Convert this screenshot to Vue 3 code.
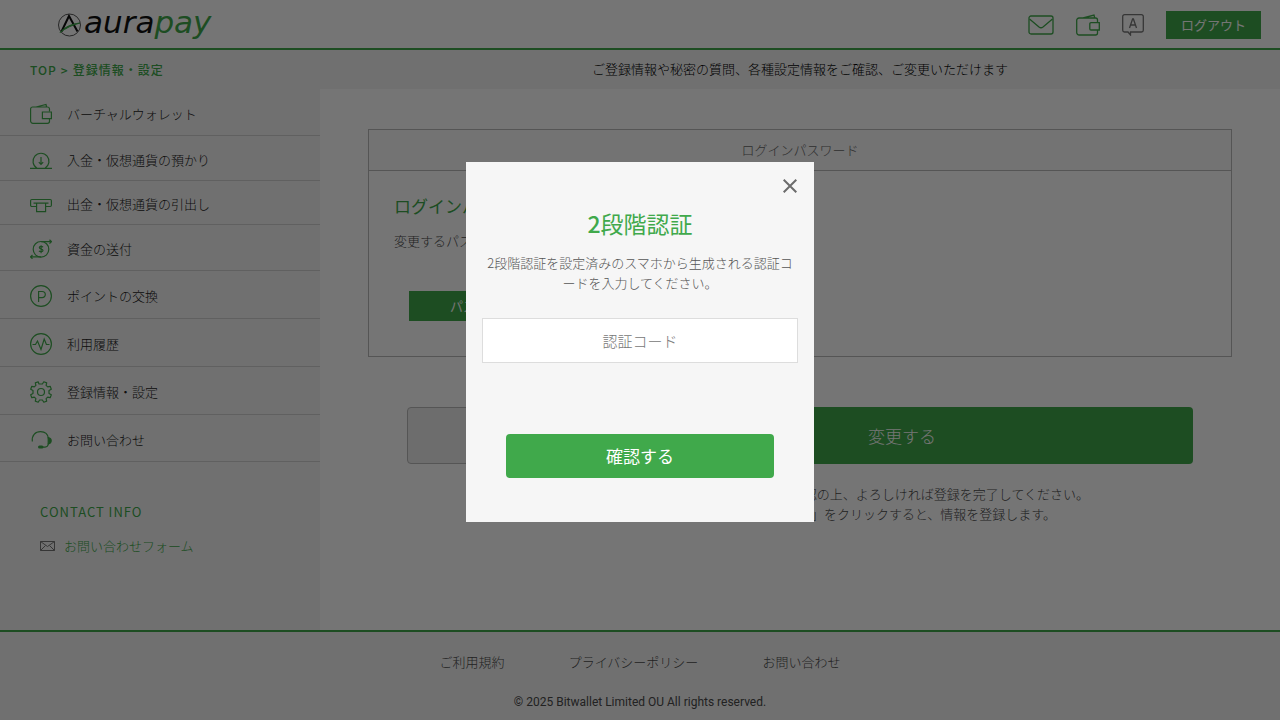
<script setup>
import { ref } from 'vue'

const code = ref('')
const menu = [
  { id: 'wallet', label: 'バーチャルウォレット', h: 21 },
  { id: 'deposit', label: '入金・仮想通貨の預かり', h: 19 },
  { id: 'withdraw', label: '出金・仮想通貨の引出し', h: 18 },
  { id: 'send', label: '資金の送付', h: 20 },
  { id: 'points', label: 'ポイントの交換', h: 22 },
  { id: 'history', label: '利用履歴', h: 22 },
  { id: 'settings', label: '登録情報・設定', h: 22 },
  { id: 'support', label: 'お問い合わせ', h: 21 },
]
const footerLinks = ['ご利用規約', 'プライバシーポリシー', 'お問い合わせ']
</script>

<template>
  <div class="page">
    <header class="header">
      <a href="#" class="logo" aria-label="aurapay">
        <svg width="24" height="24" viewBox="0 0 24 24" fill="none">
          <circle cx="11.5" cy="12" r="11" stroke="#555" />
          <path d="M3.500 18.500 11 3l8.500 15.500" stroke="#111" stroke-width="2" />
          <path d="M2 19.500C7 14 13 11 22 10c-8 2-14 5-20 9.500z" fill="#40a94b" stroke="#40a94b" />
        </svg>
        <span class="wordmark">aura<span class="green">pay</span></span>
      </a>
      <nav class="tools" aria-label="ツール">
        <a href="#" aria-label="メール">
          <svg width="26" height="20" viewBox="0 0 26 20" fill="none" stroke="#40a94b" stroke-width="1.300">
            <rect x="1" y="1" width="24" height="18" rx="2" />
            <path d="m1.500 4 9.500 8c1.300 1 2.700 1 4 0l9.500-8" />
          </svg>
        </a>
        <a href="#" aria-label="ウォレット">
          <svg width="24" height="22" viewBox="0 0 24 22" fill="none" stroke="#40a94b" stroke-width="1.300">
            <path d="M21.500 8V6a2 2 0 0 0-2-2H3a2.300 2.300 0 0 0-2.300 2.300v12.200A2.500 2.500 0 0 0 3.200 21h16.300a2 2 0 0 0 2-2v-3M7 4l11-3 .7 3" />
            <path d="M23.300 8.700H15a1.200 1.200 0 0 0-1.200 1.200v4.900A1.200 1.200 0 0 0 15 16h8.300z" />
          </svg>
        </a>
        <a href="#" aria-label="言語">
          <svg width="22" height="22" viewBox="0 0 22 22" fill="none" stroke="#777" stroke-width="1.300">
            <path d="M6 18H2.500A1.800 1.800 0 0 1 .7 16.200V2.500A1.800 1.800 0 0 1 2.500.7h17a1.800 1.800 0 0 1 1.800 1.800v13.700a1.800 1.800 0 0 1-1.800 1.800H8.500v3z" />
            <path d="m7.500 14 3.100-9h.8l3.100 9M8.500 11h5" />
          </svg>
        </a>
        <button type="button" class="logout">ログアウト</button>
      </nav>
    </header>

    <div class="subbar">
      <nav class="crumbs" aria-label="パンくず"><a href="#">TOP</a><span>&gt;</span><a href="#">登録情報・設定</a></nav>
      <p class="lead">ご登録情報や秘密の質問、各種設定情報をご確認、ご変更いただけます</p>
    </div>

    <div class="columns">
      <aside class="sidebar">
        <ul class="menu">
          <li v-for="m in menu" :key="m.id">
            <a href="#">
              <svg width="22" :height="m.h" :viewBox="`0 0 22 ${m.h}`" fill="none" stroke="#40a94b" stroke-width="1.200">
                <template v-if="m.id === 'wallet'">
                  <path d="M19.500 8.500V6a2 2 0 0 0-2-2H2.600a2 2 0 0 0-2 2v12a2.300 2.300 0 0 0 2.300 2.300h14.600a2 2 0 0 0 2-2v-2.500M6 4l10-2.500.6 2.500" />
                  <path d="M21.400 9h-9v6.600h9z" />
                </template>
                <template v-else-if="m.id === 'deposit'">
                  <path d="M0 18.400h22M7 18.200a8 8 0 1 1 8 0M11 7v7.500M8.800 12.200 11 14.500l2.200-2.300" />
                </template>
                <template v-else-if="m.id === 'withdraw'">
                  <path d="M6 11.500H1.800A1.200 1.200 0 0 1 .6 10.300V5.700a1.200 1.200 0 0 1 1.200-1.200h18.400a1.200 1.200 0 0 1 1.200 1.200v4.600a1.200 1.200 0 0 1-1.200 1.200H16" />
                  <path d="M3.500 8.200h15M6.600 8.200v8.500h9V8.200" />
                </template>
                <template v-else-if="m.id === 'send'">
                  <circle cx="11" cy="10.300" r="7.800" />
                  <path d="M11 2.700h10.500M19.500.8l2 1.900-2 1.900M11 17.900H.5M2.500 16l-2 1.900 2 1.900" />
                  <path d="M13 8.200c-.5-.9-3.700-1.200-3.700.4 0 1.800 3.700 1 3.700 2.900 0 1.700-3.300 1.500-4 .4M11.100 6.200v8" />
                </template>
                <template v-else-if="m.id === 'points'">
                  <circle cx="11" cy="11" r="10.400" />
                  <path d="M8.600 17V6.500h3.600a3.100 3.100 0 0 1 0 6.200H8.600" />
                </template>
                <template v-else-if="m.id === 'history'">
                  <circle cx="11" cy="11" r="10.400" />
                  <path d="M2.500 11.500h3l2-3.500 3.500 8.500L14.200 6l2.200 5.500h3.100" />
                </template>
                <template v-else-if="m.id === 'settings'">
                  <circle cx="11" cy="11" r="3.500" />
                  <path d="M9 3 8.200.8 5.300 1.900l.6 2.500-1.600 1.500-2.500-.6L.7 8.200 3 9.600v2.800L.7 13.800l1.100 2.900 2.500-.6 1.600 1.500-.6 2.500 2.900 1.100L9.600 19h2.800l1.400 2.200 2.900-1.100-.6-2.500 1.600-1.500 2.500.6 1.100-2.900-2.300-1.400V9.600l2.300-1.400-1.100-2.900-2.500.6-1.600-1.500.6-2.500L13.800.8 12.400 3z" stroke-linejoin="round" />
                </template>
                <template v-else>
                  <path d="M2.300 12.500C1.500 6.500 5.300 2.700 10.500 2.700c4.500 0 7.500 2.800 8 7M18.500 14c-.3 3-1 4-3.500 4.200h-3" />
                  <path d="M18.200 8.500c4 .8 4 5.500 0 6.300z" fill="#40a94b" stroke="#40a94b" />
                  <rect x="8" y="16.600" width="5.500" height="3" rx="1.500" fill="#40a94b" stroke="none" />
                </template>
              </svg>
              <span>{{ m.label }}</span>
            </a>
          </li>
        </ul>
        <section class="contact">
          <h2>CONTACT INFO</h2>
          <a href="#">
            <svg width="15" height="10" viewBox="0 0 15 10" fill="none" stroke="#777">
              <path d="M.5.5h14v9H.5zM.5.5l7 5 7-5M.5 9.500l5-5M14.500 9.500l-5-5" />
            </svg>
            <span>お問い合わせフォーム</span>
          </a>
        </section>
      </aside>

      <main class="main">
        <section class="panel">
          <h2 class="panel-head">ログインパスワード</h2>
          <div class="panel-body">
            <h3>ログインパスワード</h3>
            <p>変更するパスワードを選択</p>
            <button type="button" class="small-btn">パスワードの変更</button>
          </div>
        </section>
        <div class="actions">
          <button type="button" class="back">戻る</button>
          <button type="button" class="change">変更する</button>
        </div>
        <p class="note">
          ご入力いただいた1件の変更内容に誤りがないか確認の上、よろしければ登録を完了してください。<br />
          ご確認後、画面下部にある2つ目の「変更する」をクリックすると、情報を登録します。
        </p>
      </main>
    </div>

    <footer class="footer">
      <nav aria-label="フッター"><a v-for="l in footerLinks" :key="l" href="#">{{ l }}</a></nav>
      <small>© 2025 Bitwallet Limited OU All rights reserved.</small>
    </footer>

    <div class="overlay">
      <form class="modal" role="dialog" aria-modal="true" aria-labelledby="modal-title" @submit.prevent>
        <button type="button" class="close" aria-label="閉じる">
          <svg width="14" height="14" viewBox="0 0 14 14" stroke="#6b6b6b" stroke-width="2"><path d="m.7.7 12.600 12.600M13.300.7.700 13.300" /></svg>
        </button>
        <h1 id="modal-title"><b>2</b>段階認証</h1>
        <p>2段階認証を設定済みのスマホから生成される認証コードを入力してください。</p>
        <input v-model="code" type="text" placeholder="認証コード" aria-label="認証コード" />
        <button type="submit" class="confirm">確認する</button>
      </form>
    </div>
  </div>
</template>

<style>
body {
  margin: 0;
}
</style>

<style scoped>
* {
  box-sizing: border-box;
}
.page {
  display: flex;
  flex-direction: column;
  min-height: 100vh;
  background: #fff;
  color: #4a4a4a;
  font-family: "Noto Sans CJK JP", sans-serif;
  font-size: 13px;
  font-weight: 300;
  line-height: 20px;
}
a {
  color: inherit;
  text-decoration: none;
}
h1, h2, h3, p, ul {
  margin: 0;
  padding: 0;
  font-weight: 300;
}
ul {
  list-style: none;
}
svg {
  display: block;
  flex: none;
}
button, input {
  font: inherit;
}
button {
  padding: 0;
  border: 0;
  background: #40a94b;
  color: #fff;
}
.header {
  display: flex;
  align-items: center;
  justify-content: space-between;
  height: 50px;
  padding: 0 19px 0 58px;
  border-bottom: 2px solid #40a94b;
}
.logo {
  display: flex;
  align-items: center;
  gap: 2px;
  padding-top: 2px;
}
.wordmark {
  padding-bottom: 6px;
  color: #111;
  font-family: "DejaVu Sans", sans-serif;
  font-size: 31px;
  font-style: italic;
  line-height: 32px;
  font-weight: 400;
}
.green {
  color: #40a94b;
}
.tools {
  display: flex;
  align-items: center;
  gap: 22px;
  padding-top: 2px;
}
.logout {
  width: 95px;
  height: 28px;
  font-weight: 400;
}
.subbar {
  display: flex;
  height: 39px;
  align-items: center;
  background: #f5f5f5;
}
.crumbs {
  display: flex;
  flex: 0 0 25%;
  gap: 4px;
  padding-left: 30px;
  color: #40a94b;
  font-size: 12px;
  font-weight: 500;
  letter-spacing: 1px;
}
.lead {
  flex: 1;
  padding-bottom: 2px;
  color: #000;
  text-align: center;
}
.columns {
  display: flex;
  flex: 1;
}
.sidebar {
  flex: 0 0 25%;
  background: #f5f5f5;
}
.menu a {
  display: flex;
  align-items: center;
  gap: 15px;
  padding: 14px 30px 11px;
  border-bottom: 1px solid #d2d2d2;
  color: #222;
  line-height: 18px;
}
.contact {
  padding: 40px;
  color: #40a94b;
}
.contact h2 {
  font-size: 13px;
  font-weight: 400;
  letter-spacing: 1px;
}
.contact a {
  display: flex;
  align-items: center;
  gap: 9px;
  margin-top: 14px;
}
.main {
  flex: 1;
  padding: 40px 48px;
}
.panel {
  border: 1px solid #b9b9b9;
}
.panel-head {
  padding: 10px;
  border-bottom: 1px solid #b9b9b9;
  background: #fafafa;
  color: #666;
  font-size: 13px;
  text-align: center;
}
.panel-body {
  padding: 24px 25px 35px;
}
.panel-body h3 {
  color: #40a94b;
  font-size: 17px;
  font-weight: 400;
  line-height: 22px;
}
.panel-body p {
  margin-top: 14px;
}
.small-btn {
  display: block;
  width: 186px;
  height: 30px;
  margin: 40px 0 0 15px;
  font-weight: 400;
}
.actions {
  display: grid;
  grid-template-columns: 24fr 76fr;
  gap: 20px;
  margin: 50px 39px 20px;
}
.actions button {
  height: 57px;
  border-radius: 4px;
  font-size: 17px;
}
.actions .back {
  border: 1px solid #b9b9b9;
  background: #eee;
  color: #595757;
}
.note {
  text-align: center;
}
.footer {
  display: flex;
  flex-direction: column;
  align-items: center;
  gap: 20px;
  height: 90px;
  padding-top: 20px;
  border-top: 2px solid #40a94b;
  background: #f5f5f5;
}
.footer nav {
  display: flex;
  gap: 64px;
}
.footer small {
  font-family: Roboto, sans-serif;
  font-size: 12px;
  font-weight: 400;
}
.overlay {
  position: fixed;
  inset: 0;
  display: flex;
  align-items: center;
  justify-content: center;
  padding-bottom: 36px;
  background: rgba(0, 0, 0, 0.54);
}
.modal {
  position: relative;
  display: flex;
  flex-direction: column;
  width: 348px;
  padding: 44px 16px;
  background: #f6f6f6;
  color: #555;
  text-align: center;
}
.close {
  position: absolute;
  top: 17px;
  right: 17px;
  background: none;
}
.modal h1 {
  color: #40a94b;
  font-size: 23px;
  font-weight: 400;
  line-height: 34px;
}
.modal h1 b {
  font-weight: 500;
}
.modal p {
  margin: 13px 4px 25px;
}
.modal input {
  width: 100%;
  height: 45px;
  border: 1px solid #ddd;
  border-radius: 0;
  background: #fff;
  font-size: 15px;
  text-align: center;
}
.modal input::placeholder {
  color: #777;
  opacity: 1;
}
.confirm {
  height: 44px;
  margin: 71px 24px 0;
  border-radius: 4px;
  font-size: 17px;
  font-weight: 400;
}
</style>
